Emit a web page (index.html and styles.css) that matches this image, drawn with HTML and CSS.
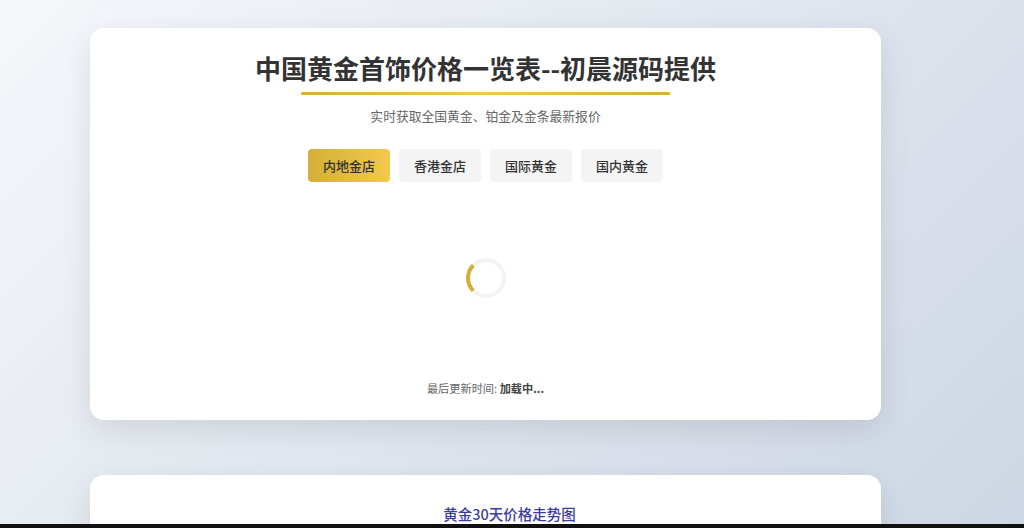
FILE: index.html
```html
<!DOCTYPE html>
<html lang="zh-CN">
<head>
    <meta charset="UTF-8">
    <meta name="viewport" content="width=device-width, initial-scale=1.0">
    <title>中国黄金首饰价格一览表</title>
    <link rel="stylesheet" href="styles.css">
</head>
<body>

    <div class="container">
        <!-- Price Card -->
        <div class="card">
            <h1 class="title">中国黄金首饰价格一览表--初晨源码提供</h1>
            <div class="title-line"></div>
            <p class="subtitle">实时获取全国黄金、铂金及金条最新报价</p>

            <div class="tabs">
                <button class="tab active">内地金店</button>
                <button class="tab">香港金店</button>
                <button class="tab">国际黄金</button>
                <button class="tab">国内黄金</button>
            </div>

            <div class="loading">
                <div class="spinner"></div>
            </div>

            <div class="update-time">最后更新时间: <strong>加载中...</strong></div>
        </div>

        <!-- Chart Card -->
        <div class="card chart-card">
            <div class="chart-title">黄金30天价格走势图</div>
        </div>
    </div>

    <div class="bottom-bar"></div>
</body>
</html>
```

FILE: styles.css
```css
html {
    background: linear-gradient(135deg, #f5f7fa 0%, #cdd6e4 100%) fixed;
}

body {
    font-family: "Noto Sans CJK SC", "Noto Sans", sans-serif;
    margin: 0;
    padding: 0;
    color: #333;
}

.container {
    width: 791px;
    margin-left: 90px;
    padding-top: 28px;
    padding-bottom: 40px;
}

.card {
    background-color: #fff;
    border-radius: 14px;
    box-shadow: 0 10px 30px rgba(0, 0, 0, 0.1);
    padding: 23px 30px 24px;
    text-align: center;
    margin-bottom: 55px;
}

.title {
    font-size: 26px;
    font-weight: bold;
    line-height: 34px;
    margin: 0;
    color: #333;
}

.title-line {
    width: 369px;
    height: 3px;
    margin: 7px auto 0;
    background: linear-gradient(90deg, #d4af37, #f0c94a, #d4af37);
    border-radius: 2px;
}

.subtitle {
    font-size: 12.8px;
    line-height: 18px;
    color: #666;
    margin: 12px 0 0;
}

.tabs {
    display: flex;
    justify-content: center;
    gap: 9px;
    margin-top: 24px;
}

.tab {
    font-family: inherit;
    font-size: 13px;
    font-weight: 500;
    line-height: 17px;
    padding: 8px 15px;
    border: none;
    border-radius: 4px;
    background-color: #f4f4f4;
    color: #333;
    cursor: pointer;
}

.tab.active {
    background: linear-gradient(90deg, #d4af37, #f2c94c);
}

.loading {
    display: flex;
    justify-content: center;
    padding: 76px 0 82px;
}

.spinner {
    width: 32px;
    height: 32px;
    border: 4px solid #f3f3f3;
    border-left-color: #d4af37;
    border-radius: 50%;
}

.update-time {
    font-size: 11.2px;
    line-height: 16px;
    color: #666;
}

.update-time strong {
    color: #444;
}

.chart-card {
    background: linear-gradient(180deg, #fff 0%, #fff 40%, #f1f1f1 100%);
    height: 120px;
    padding-top: 28px;
}

.chart-title {
    font-family: "Noto Sans CJK SC", serif;
    font-size: 14.5px;
    font-weight: 500;
    color: #3d3d9c;
    padding-left: 48px;
}

.bottom-bar {
    position: fixed;
    left: 0;
    right: 0;
    bottom: 0;
    height: 4px;
    background-color: #111;
}
```
